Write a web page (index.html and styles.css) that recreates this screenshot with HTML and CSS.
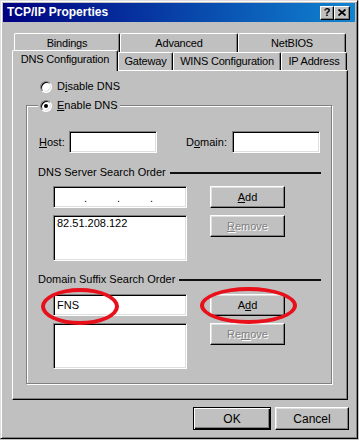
FILE: index.html
```html
<!DOCTYPE html>
<html>
  <head>
    <meta charset="UTF-8">
    <meta name="viewport" content="width=device-width,initial-scale=1">
    <link rel="stylesheet" href="styles.css">
    <title>TCP/IP Properties</title>
  </head>
  <body>
    <div class="window">
      <div class="titlebar">
        <span class="title">TCP/IP Properties</span>
        <div class="caption-btns">
          <span class="cap-btn help">?</span>
          <span class="cap-btn close">
            <svg width="8" height="7" viewBox="0 0 8 7"><path d="M0.5 0.5 L7.5 6.5 M7.5 0.5 L0.5 6.5" stroke="#000" stroke-width="1.7" fill="none"/></svg>
          </span>
        </div>
      </div>
      <div class="dialog">
        <div class="tabs">
          <div class="tab-row back">
            <div class="tab" style="width:106px">Bindings</div>
            <div class="tab" style="width:118px">Advanced</div>
            <div class="tab" style="width:108px">NetBIOS</div>
          </div>
          <div class="tab-row front">
            <div class="tab selected" style="width:106px">DNS Configuration</div>
            <div class="tab" style="width:55px">Gateway</div>
            <div class="tab" style="width:108px">WINS Configuration</div>
            <div class="tab" style="width:66px">IP Address</div>
          </div>
        </div>
        <div class="panel">
          <div class="radio-line disable"><span class="radio"></span>D<u>i</u>sable DNS</div>
          <fieldset class="group">
            <legend class="radio-line"><span class="radio checked"></span><u>E</u>nable DNS</legend>
            <div class="field-row">
              <span class="host-label"><u>H</u>ost:</span>
              <div class="field short"></div>
              <span class="domain-label">D<u>o</u>main:</span>
              <div class="field short"></div>
            </div>
            <div class="section"><span>DNS Server Search Order</span><span class="section-line"></span></div>
            <div class="list-row">
              <div class="field wide ip"><span>.</span><span>.</span><span>.</span></div>
              <button class="btn"><u>A</u>dd</button>
            </div>
            <div class="list-row">
              <div class="field wide list">82.51.208.122</div>
              <button class="btn" disabled><u>R</u>emove</button>
            </div>
            <div class="section second"><span>Domain Suffix Search Order</span><span class="section-line"></span></div>
            <div class="list-row first">
              <div class="field wide">FNS</div>
              <button class="btn">A<u>d</u>d</button>
            </div>
            <div class="list-row">
              <div class="field wide list"></div>
              <button class="btn" disabled>Re<u>m</u>ove</button>
            </div>
          </fieldset>
        </div>
        <div class="footer">
          <button class="btn default">OK</button>
          <button class="btn cancel">Cancel</button>
        </div>
      </div>
      <span class="mark mark-fns"></span>
      <span class="mark mark-add"></span>
    </div>
  </body>
</html>
```
FILE: styles.css
```css
body {
  margin: 0;
  background-color: #c0c0c0;
  font-family: "Liberation Sans", Arial, sans-serif;
  font-size: 11px;
  line-height: 13px;
  color: #000;
}

.window {
  position: relative;
  width: 358px;
  height: 439px;
  box-sizing: border-box;
  padding: 2px;
  background-color: #c0c0c0;
  border: 1px solid;
  border-color: #dfdfdf #000 #000 #dfdfdf;
  box-shadow: inset 1px 1px #fff, inset -1px -1px #808080;
}

.titlebar {
  height: 19px;
  display: flex;
  align-items: center;
  justify-content: space-between;
  padding: 0 5px 0 4px;
  background: linear-gradient(to right, #000080, #1084d0);
  margin-bottom: 11px;
}

.title {
  color: #fff;
  font-weight: 700;
  font-size: 12px;
}

.caption-btns {
  display: flex;
}

.cap-btn {
  width: 16px;
  height: 14px;
  box-sizing: border-box;
  display: flex;
  align-items: center;
  justify-content: center;
  background-color: #c0c0c0;
  border: 1px solid;
  border-color: #fff #000 #000 #fff;
  box-shadow: inset -1px -1px #808080;
  font-weight: 700;
  font-size: 11px;
}

.help {
  width: 14px;
}

.dialog {
  padding-left: 9px;
}

.tabs {
  height: 37px;
}

.tab-row {
  display: flex;
}

.tab-row.back {
  margin-left: 2px;
  height: 19px;
}

.tab-row.front {
  height: 18px;
}

.tab {
  box-sizing: border-box;
  height: 100%;
  text-align: center;
  padding-top: 3px;
  letter-spacing: -0.2px;
  border-top: 1px solid #fff;
  border-left: 1px solid #fff;
  border-right: 1px solid #000;
  border-radius: 2px 2px 0 0;
  box-shadow: inset -1px 0 #808080;
  background-color: #c0c0c0;
}

.tab-row.front .tab {
  padding-top: 2px;
}

.tab-row.front .tab.selected {
  position: relative;
  z-index: 1;
  height: 21px;
  margin-top: -2px;
  padding-top: 2px;
}

.panel {
  width: 336px;
  height: 330px;
  box-sizing: border-box;
  border: 1px solid;
  border-color: #fff #000 #000 #fff;
  box-shadow: inset -1px -1px #808080;
  padding: 9px 0 0 13px;
}

.radio-line {
  display: flex;
  align-items: center;
  height: 13px;
}

.radio-line.disable {
  margin-left: 14px;
}

.radio {
  width: 12px;
  height: 12px;
  box-sizing: border-box;
  border-radius: 50%;
  background-color: #fff;
  border: 1px solid;
  border-color: #808080 #fff #fff #808080;
  box-shadow: inset 1px 1px #000, inset -1px -1px #dfdfdf;
  margin-right: 5px;
  display: flex;
  align-items: center;
  justify-content: center;
}

.radio.checked::after {
  content: "";
  width: 4px;
  height: 4px;
  border-radius: 50%;
  background-color: #000;
}

.group {
  width: 306px;
  box-sizing: border-box;
  margin: 6px 0 0 0;
  padding: 19px 0 14px 0;
  border: 1px solid #808080;
  box-shadow: inset 1px 1px #fff, 1px 1px #fff;
}

.group legend {
  margin-left: 11px;
  padding: 0 2px;
  background-color: #c0c0c0;
}

.field-row {
  display: flex;
  align-items: center;
}

.host-label {
  margin-left: 12px;
  width: 30px;
}

.domain-label {
  margin-left: 29px;
  width: 46px;
}

.field {
  box-sizing: border-box;
  height: 22px;
  background-color: #fff;
  border: 1px solid;
  border-color: #808080 #fff #fff #808080;
  box-shadow: inset 1px 1px #000, inset -1px -1px #dfdfdf;
  padding: 0 3px;
  display: flex;
  align-items: center;
}

.field.short {
  width: 88px;
}

.field.wide {
  width: 134px;
  margin-left: 26px;
}

.field.list {
  height: 46px;
  align-items: flex-start;
  padding-top: 1px;
}

.ip {
  padding: 0;
}

.ip span {
  width: 33px;
  text-align: right;
  padding-top: 3px;
}

.section {
  display: flex;
  align-items: center;
  width: 283px;
  margin: 13px 0 0 11px;
  height: 13px;
}

.section.second {
  margin-top: 12px;
}

.section-line {
  flex: 1;
  height: 2px;
  background-color: #111;
  margin-left: 4px;
}

.list-row {
  display: flex;
  align-items: flex-start;
  margin-top: 7px;
}

.list-row.first {
  margin-top: 8px;
}

.btn {
  box-sizing: border-box;
  width: 75px;
  height: 22px;
  margin: 0 0 0 23px;
  padding: 0;
  font-family: "Liberation Sans", Arial, sans-serif;
  font-size: 11px;
  color: #000;
  background-color: #c0c0c0;
  border: 1px solid;
  border-color: #fff #000 #000 #fff;
  box-shadow: inset -1px -1px #808080, inset 1px 1px #dfdfdf;
}

.btn:disabled {
  color: #808080;
  text-shadow: 1px 1px 0 #fff;
}

.footer {
  display: flex;
  justify-content: flex-end;
  margin-top: 7px;
  padding-right: 6px;
}

.footer .btn {
  height: 23px;
  margin: 0;
  font-size: 12px;
}

.btn.default {
  width: 78px;
  border: 1px solid #000;
  box-shadow: inset 1px 1px #fff, inset -1px -1px #000, inset -2px -2px #808080;
}

.btn.cancel {
  width: 74px;
  margin-left: 4px;
}

.mark {
  position: absolute;
  box-sizing: border-box;
  border: 4px solid #e8101a;
  border-radius: 50%;
}

.mark-fns {
  left: 40px;
  top: 287px;
  width: 78px;
  height: 37px;
}

.mark-add {
  left: 199px;
  top: 286px;
  width: 97px;
  height: 37px;
}
```
